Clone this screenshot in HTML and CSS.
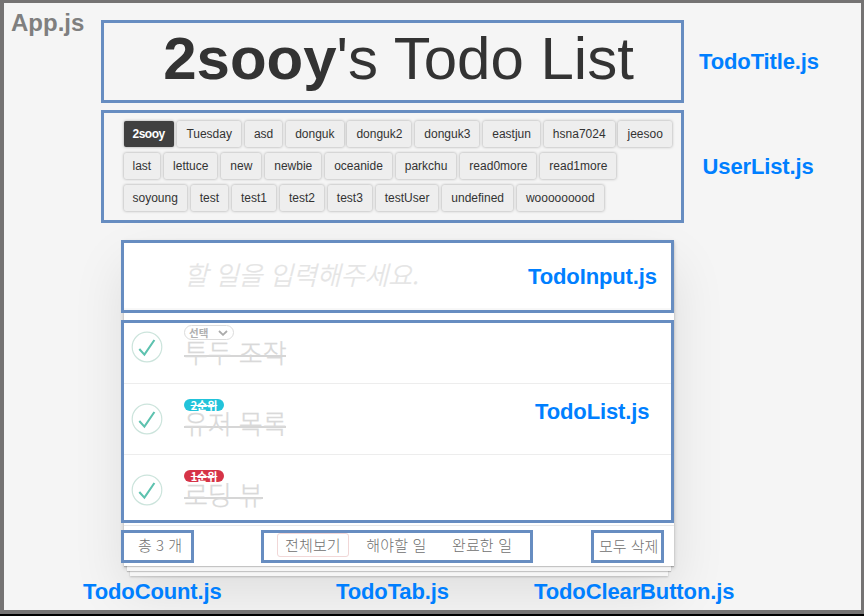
FILE: index.html
```
<!DOCTYPE html>
<html lang="ko">
<head>
<meta charset="utf-8">
<title>Todo List</title>
<link rel="stylesheet" href="styles.css">
</head>
<body>
<div class="app">
  <span class="note note-app">App.js</span>
  <span class="note note-title">TodoTitle.js</span>
  <span class="note note-users">UserList.js</span>
  <span class="note note-input">TodoInput.js</span>
  <span class="note note-list">TodoList.js</span>
  <span class="note note-count">TodoCount.js</span>
  <span class="note note-tab">TodoTab.js</span>
  <span class="note note-clear">TodoClearButton.js</span>

  <h1 class="frame title"><span><strong>2sooy</strong>'s Todo List</span></h1>

  <div class="frame users">
    <div class="user-row">
      <button class="active">2sooy</button><button>Tuesday</button><button>asd</button><button>donguk</button><button>donguk2</button><button>donguk3</button><button>eastjun</button><button>hsna7024</button><button>jeesoo</button>
    </div>
    <div class="user-row">
      <button>last</button><button>lettuce</button><button>new</button><button>newbie</button><button>oceanide</button><button>parkchu</button><button>read0more</button><button>read1more</button>
    </div>
    <div class="user-row">
      <button>soyoung</button><button>test</button><button>test1</button><button>test2</button><button>test3</button><button>testUser</button><button>undefined</button><button>wooooooood</button>
    </div>
  </div>

  <main class="card">
    <div class="frame entry">할 일을 입력해주세요.</div>
    <ul class="frame list">
      <li>
        <svg class="check" viewBox="0 0 32 32"><circle cx="16" cy="16" r="14.8"/><path d="M8.3 18 13.4 23.6 23.4 9"/></svg>
        <div class="body">
          <span class="select">선택<svg viewBox="0 0 10 6"><path d="M1 1 5 4.8 9 1"/></svg></span>
          <span class="text">투두 조작</span>
        </div>
      </li>
      <li>
        <svg class="check" viewBox="0 0 32 32"><circle cx="16" cy="16" r="14.8"/><path d="M8.3 18 13.4 23.6 23.4 9"/></svg>
        <div class="body">
          <span class="chip second">2순위</span>
          <span class="text">유저 목록</span>
        </div>
      </li>
      <li>
        <svg class="check" viewBox="0 0 32 32"><circle cx="16" cy="16" r="14.8"/><path d="M8.3 18 13.4 23.6 23.4 9"/></svg>
        <div class="body">
          <span class="chip first">1순위</span>
          <span class="text">로딩 뷰</span>
        </div>
      </li>
    </ul>
    <footer class="footer">
      <div class="frame count">총 3 개</div>
      <nav class="frame tabs"><a class="selected">전체보기</a><a>해야할 일</a><a>완료한 일</a></nav>
      <div class="frame clear">모두 삭제</div>
    </footer>
  </main>
</div>
</body>
</html>
```
FILE: styles.css
```
* { box-sizing: border-box; }
body {
  margin: 0;
  background: #000;
  font-family: "Liberation Sans", "Noto Sans CJK KR", sans-serif;
}
.app {
  position: relative;
  height: 614px;
  padding: 17px 0 0 97px;
  border: 3px solid #757373;
  border-left-width: 4px;
  border-bottom-width: 4px;
  background: #f5f5f5;
  overflow: hidden;
}
.frame { border: 3px solid #678dc1; margin: 0; }

.note {
  position: absolute;
  z-index: 2;
  font-weight: bold;
  font-size: 22px;
  line-height: 26px;
  letter-spacing: -.12px;
  color: #007fff;
  white-space: nowrap;
}
.note-app { left: 7px; top: 7px; font-size: 24px; letter-spacing: 0; color: #7f7f7f; }
.note-title { left: 695px; top: 46px; }
.note-users { left: 698.5px; top: 151px; }
.note-input { left: 524px; top: 261px; }
.note-list { left: 531px; top: 396px; }
.note-count { left: 79px; top: 576px; }
.note-tab { left: 332px; top: 576px; }
.note-clear { left: 530px; top: 576px; }

.title {
  width: 583px;
  height: 83px;
  padding-left: 12px;
  text-align: center;
  font-weight: 400;
  font-size: 60px;
  line-height: 72px;
  color: #333;
}
.users {
  display: flex;
  flex-direction: column;
  gap: 6px;
  width: 583px;
  height: 113px;
  margin-top: 7px;
  padding: 8px 0 0 19.5px;
}
.user-row { display: flex; gap: 3.9px; }
.user-row button {
  height: 26px;
  padding: 0 9px;
  border: 0;
  border-radius: 2px;
  background: #eee;
  box-shadow: 0 0 3px rgba(0, 0, 0, .36);
  font: 12px/26px "Liberation Sans", sans-serif;
  color: #333;
}
.user-row .active {
  width: 50px;
  background: #404040;
  color: #fff;
  font-weight: bold;
  letter-spacing: -.5px;
}

.card {
  width: 550px;
  height: 326px;
  margin: 17px 0 0 23px;
  background: #fff;
  box-shadow: 0 1px 1px rgba(0, 0, 0, .2), 0 8px 0 -3px #f6f6f6,
    0 9px 1px -3px rgba(0, 0, 0, .2), 0 16px 0 -6px #f6f6f6,
    0 17px 2px -6px rgba(0, 0, 0, .2), 0 2px 4px rgba(0, 0, 0, .2),
    0 25px 50px rgba(0, 0, 0, .1);
}
.entry {
  height: 73px;
  margin-left: -3px;
  padding-left: 60px;
  font: italic 300 26px/62px "Noto Sans CJK KR", sans-serif;
  letter-spacing: -.2px;
  color: #e4e4e4;
  -webkit-text-stroke: .3px #e4e4e4;
  box-shadow: inset 0 -2px 1px rgba(0, 0, 0, .03);
}
.list {
  height: 203px;
  margin: 7px 0 0 -3px;
  padding: 0;
  list-style: none;
}
.list li {
  display: flex;
  height: 71px;
  padding: 19px 0 0 7px;
  border-bottom: 1px solid #ededed;
}
.list li:first-child { height: 61px; padding-top: 8px; }
.list li:last-child { border: 0; height: 65px; }
.check { width: 32px; height: 32px; fill: none; }
.check circle { stroke: #cce4dc; stroke-width: 1.2; }
.check path { stroke: #5dc2af; stroke-width: 2.1; }
.body {
  display: flex;
  flex-direction: column;
  align-items: flex-start;
  margin: -4px 0 0 21px;
}
.chip {
  width: 40px;
  height: 12px;
  border-radius: 6px;
  text-align: center;
  font: bold 11px/12px "Noto Sans CJK KR", sans-serif;
  color: #fff;
  text-decoration: line-through;
}
.second { background: #22c3da; }
.first { background: #d63447; }
.select {
  display: flex;
  align-items: center;
  justify-content: space-between;
  width: 50px;
  height: 15px;
  margin: -2px 0 0;
  padding: 0 5px 0 4px;
  border: 1px solid #dcdcdc;
  border-radius: 8px;
  font: bold 10.5px/13px "Noto Sans CJK KR", sans-serif;
  color: #b0b0b0;
}
.select svg { width: 10px; height: 6px; fill: none; stroke: #aaa; stroke-width: 1.8; }
/* The strike sits a little below the middle of the hangul. */
.text {
  font: 300 26px/23px "Noto Sans CJK KR", sans-serif;
  letter-spacing: -.1px;
  color: #d9d9d9;
  -webkit-text-stroke: .3px #d9d9d9;
  background: linear-gradient(#d6d6d6, #d6d6d6) 0 15px / 100% 2px no-repeat;
}
.footer {
  display: flex;
  position: relative;
  margin-top: 2px;
  padding-top: 4px;
  border-top: 1px solid #e8e8e8;
  font: 300 15px/24px "Noto Sans CJK KR", sans-serif;
  color: #707070;
}
.footer .frame { height: 33px; white-space: nowrap; }
.footer .count { width: 73px; margin-left: -3px; padding-left: 14px; }
.tabs { display: flex; width: 272px; margin-left: 67px; padding-left: 13px; letter-spacing: .15px; }
.tabs a { height: 24px; padding: 0 7px; margin-right: 9.5px; border: 1px solid transparent; border-radius: 3px; line-height: 22px; }
.tabs .selected { border-color: #f1d7d7; }
.footer .clear { width: 73px; margin-left: 58px; padding-left: 5px; line-height: 25px; }
```
